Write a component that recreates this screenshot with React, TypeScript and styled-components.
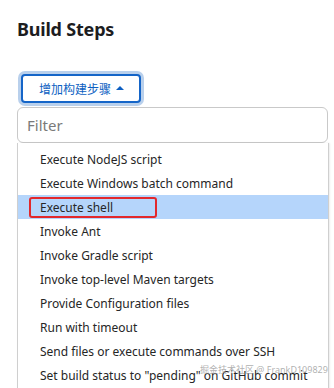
import React from "react";
import styled, { createGlobalStyle } from "styled-components";

const Global = createGlobalStyle`
  html, body { margin: 0; padding: 0; background: #fff; }
  body { font-family: "Noto Sans", "Noto Sans CJK SC", sans-serif; }
`;

const Page = styled.div`
  position: relative;
  width: 334px;
  height: 388px;
  overflow: hidden;
  padding: 17px 0 0 17px;
  box-sizing: border-box;
`;

const Title = styled.h2`
  margin: 0;
  font-size: 18px;
  line-height: 24px;
  font-weight: 700;
  color: #1d1d1f;
  letter-spacing: -0.2px;
`;

const AddButton = styled.button`
  margin: 33px 0 4px 4px;
  width: 120px;
  height: 29px;
  box-sizing: border-box;
  border: 2px solid #1565c8;
  border-radius: 4px;
  box-shadow: 0 0 0 3px #b9d0ec;
  background: #fff;
  color: #0d5fc2;
  font-family: "Noto Sans CJK SC", sans-serif;
  font-size: 12px;
  display: flex;
  align-items: center;
  justify-content: center;
  gap: 5px;
  padding: 0 0 1px 1px;
  cursor: pointer;
`;

const Caret = styled.span`
  width: 0;
  height: 0;
  border-left: 4px solid transparent;
  border-right: 4px solid transparent;
  border-bottom: 4px solid #0d5fc2;
  margin-top: -1px;
`;

const Filter = styled.input`
  display: block;
  width: 311px;
  height: 36px;
  box-sizing: border-box;
  border: 1px solid #c9c9c9;
  border-radius: 6px;
  padding: 0 9px;
  font-family: "Noto Sans", sans-serif;
  font-size: 15px;
  color: #333;
  outline: none;
  &::placeholder { color: #7a7a7a; }
`;

const Menu = styled.ul`
  list-style: none;
  margin: 0;
  padding: 4px 0 0;
  width: 312px;
  height: 260px;
  box-sizing: border-box;
  border: 1px solid #cfcfcf;
  border-top: none;
  border-radius: 0 0 4px 4px;
  box-shadow: 1px 0 2px rgba(0, 0, 0, 0.08);
`;

const Item = styled.li<{ $active?: boolean }>`
  height: 24px;
  display: flex;
  align-items: center;
  padding-left: 22px;
  font-size: 12px;
  color: #262626;
  background: ${(p) => (p.$active ? "#b5d5fb" : "transparent")};
  white-space: nowrap;
`;

const Marked = styled.span`
  display: inline-flex;
  align-items: center;
  box-sizing: border-box;
  width: 128px;
  height: 21px;
  margin-left: -11px;
  padding-left: 9px;
  border: 2px solid #e2282c;
  border-radius: 3px;
`;

const Watermark = styled.span`
  position: absolute;
  left: 200px;
  top: 363px;
  font-family: "Noto Sans", "Noto Sans CJK SC", sans-serif;
  font-size: 9px;
  color: rgba(150, 150, 150, 0.75);
  white-space: nowrap;
  pointer-events: none;
`;

const items = [
  "Execute NodeJS script",
  "Execute Windows batch command",
  "Execute shell",
  "Invoke Ant",
  "Invoke Gradle script",
  "Invoke top-level Maven targets",
  "Provide Configuration files",
  "Run with timeout",
  "Send files or execute commands over SSH",
  'Set build status to "pending" on GitHub commit',
];

export default function App() {
  return (
    <>
      <Global />
      <Page>
        <Title>Build Steps</Title>
        <AddButton>
          增加构建步骤
          <Caret />
        </AddButton>
        <Filter placeholder="Filter" />
        <Menu>
          {items.map((t) =>
            t === "Execute shell" ? (
              <Item key={t} $active>
                <Marked>{t}</Marked>
              </Item>
            ) : (
              <Item key={t}>{t}</Item>
            )
          )}
        </Menu>
        <Watermark>掘金技术社区 @ FrankD109829</Watermark>
      </Page>
    </>
  );
}
